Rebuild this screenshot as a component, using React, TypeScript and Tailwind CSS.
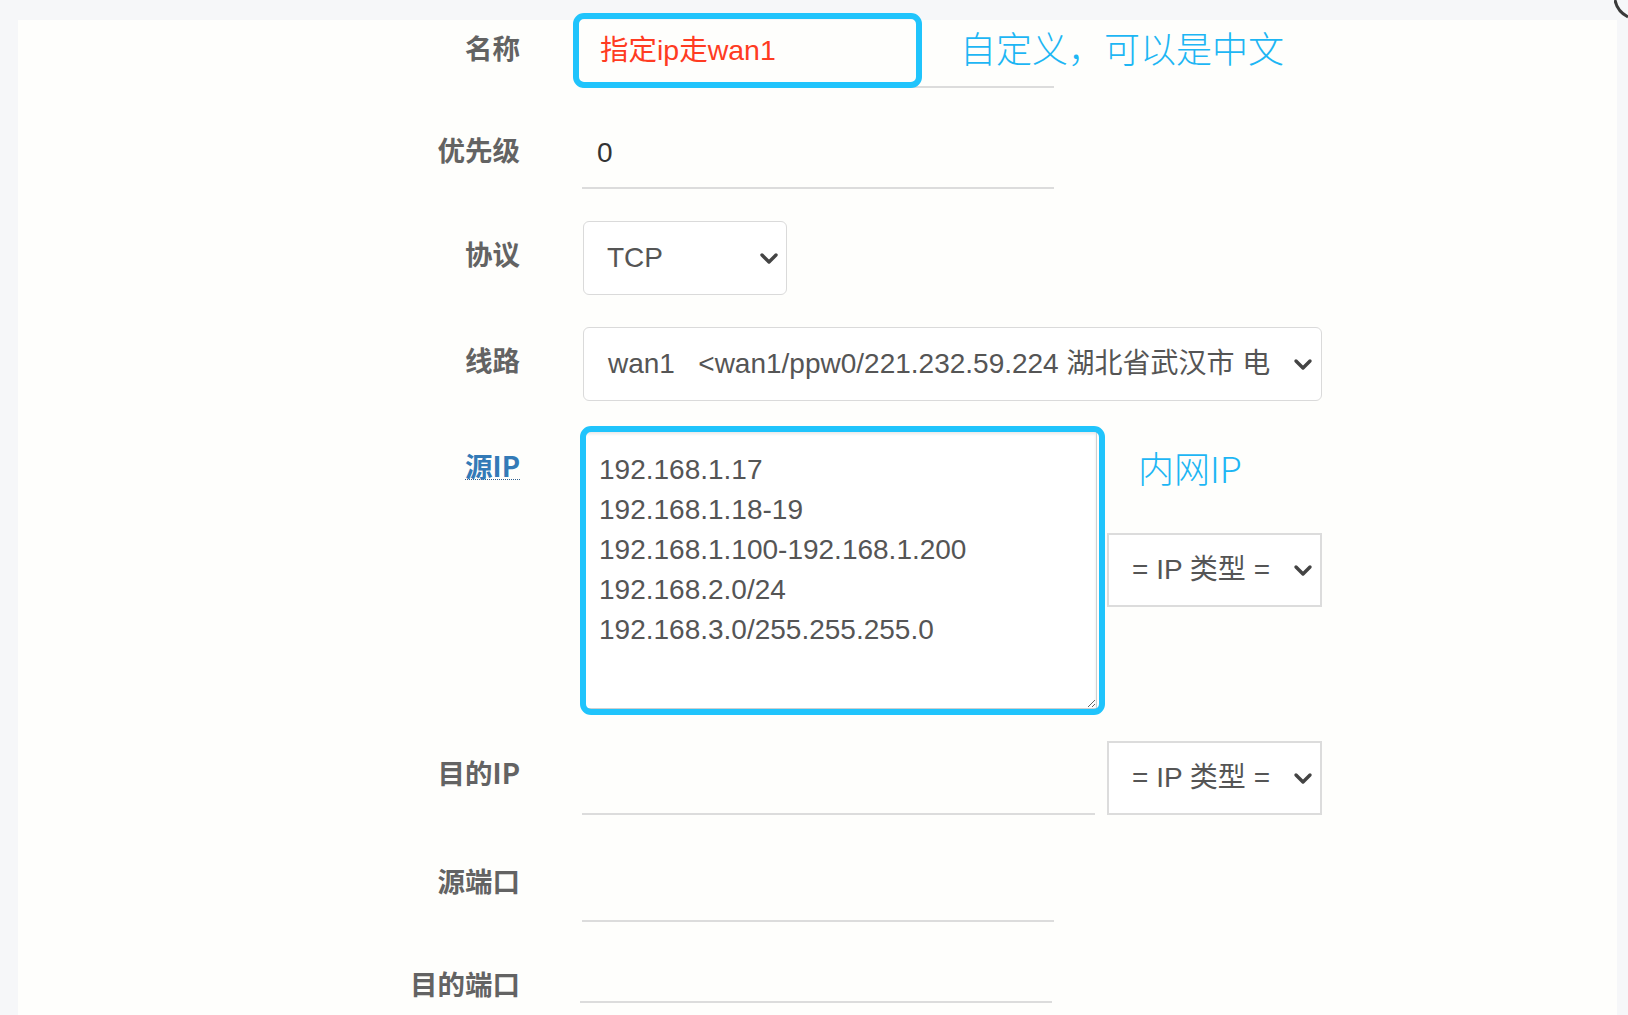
import React from "react";

const LATIN = "'Liberation Sans', 'Noto Sans CJK SC', Arial, sans-serif";
const CJK = "'Noto Sans CJK SC', 'Liberation Sans', sans-serif";

function Chevron() {
  return (
    <svg width="20" height="13" viewBox="0 0 20 13" className="shrink-0">
      <polyline
        points="3,3 10,10 17,3"
        fill="none"
        stroke="#444"
        strokeWidth="3.4"
        strokeLinecap="round"
        strokeLinejoin="round"
      />
    </svg>
  );
}

function Label({ text, offset, link }: { text: string; offset: string; link?: boolean }) {
  return (
    <div className={`w-[502px] shrink-0 text-right ${offset}`}>
      {link ? (
        <span
          className="inline-block border-b-[1.5px] border-dotted border-[#2f5f8f] text-[27.5px] font-bold leading-[28px] text-[#337ab7]"
          style={{ fontFamily: CJK }}
        >
          源IP
        </span>
      ) : (
        <span className="text-[27.5px] font-bold leading-[28px] text-[#636363]" style={{ fontFamily: CJK }}>
          {text}
        </span>
      )}
    </div>
  );
}

function UnderInput({ w, h = "h-[74px]", children }: { w: string; h?: string; children?: React.ReactNode }) {
  return (
    <div className={`${w} ${h} flex items-center border-b-2 border-[#dcdcdc]`}>{children}</div>
  );
}

export default function App() {
  return (
    <div className="relative h-[1015px] w-[1628px] overflow-hidden bg-[#f6f7f9]" style={{ fontFamily: LATIN }}>
      <div className="pl-[18px] pr-[11px] pt-[20px]">
        <div className="relative h-[995px] bg-[#fefefc]">
          <div className="flex flex-col">
            {/* 名称 */}
            <div className="flex items-start">
              <Label text="名称" offset="mt-[13px]" />
              <div className="relative ml-[62px]">
                <UnderInput w="w-[472px]" h="h-[68px]">
                  <span className="pb-[6px] pl-[18px] text-[28.5px] text-[#ff3b22]">指定ip走wan1</span>
                </UnderInput>
                <div className="pointer-events-none absolute left-[-9px] top-[-7px] h-[75px] w-[349px] rounded-[11px] border-[6px] border-[#20c4fc]" />
                <span
                  className="absolute left-[378px] top-[5px] whitespace-nowrap text-[36px] font-light leading-[44px] text-[#1db6f4]"
                  style={{ fontFamily: CJK }}
                >
                  自定义，可以是中文
                </span>
              </div>
            </div>

            {/* 优先级 */}
            <div className="mt-[27px] flex items-start">
              <Label text="优先级" offset="mt-[20px]" />
              <div className="ml-[62px]">
                <UnderInput w="w-[472px]">
                  <span className="pl-[15px] pt-[4px] text-[28px] text-[#333]">0</span>
                </UnderInput>
              </div>
            </div>

            {/* 协议 */}
            <div className="mt-[32px] flex items-start">
              <Label text="协议" offset="mt-[18px]" />
              <div className="ml-[63px] flex h-[74px] w-[204px] items-center justify-between rounded-[6px] border-[1.5px] border-[#dadada] bg-white pl-[23px] pr-[7px]">
                <span className="text-[28px] text-[#555]">TCP</span>
                <Chevron />
              </div>
            </div>

            {/* 线路 */}
            <div className="mt-[32px] flex items-start">
              <Label text="线路" offset="mt-[18px]" />
              <div className="ml-[63px] flex h-[74px] w-[739px] items-center justify-between rounded-[6px] border-[1.5px] border-[#dadada] bg-white pl-[24px] pr-[8px]">
                <span className="whitespace-pre text-[28px] text-[#555]">
                  {"wan1   <wan1/ppw0/221.232.59.224 湖北省武汉市 电"}
                </span>
                <Chevron />
              </div>
            </div>

            {/* 源IP */}
            <div className="mt-[30px] flex items-start">
              <Label text="源IP" offset="mt-[20px]" link />
              <div className="relative ml-[63px]">
                <textarea
                  readOnly
                  defaultValue={"192.168.1.17\n192.168.1.18-19\n192.168.1.100-192.168.1.200\n192.168.2.0/24\n192.168.3.0/255.255.255.0"}
                  className="block h-[278px] w-[514px] resize-y border-[1.5px] border-[#cfcfcf] bg-white px-[15px] pt-[18px] text-[28px] leading-[40px] text-[#555] shadow-[inset_0_2px_3px_rgba(0,0,0,0.09)] outline-none"
                  style={{ fontFamily: LATIN }}
                />
                <div className="pointer-events-none absolute left-[-3px] top-[-5px] h-[289px] w-[525px] rounded-[11px] border-[6px] border-[#20c4fc]" />
              </div>
              <div className="relative ml-[10px]">
                <span
                  className="absolute left-[31px] top-[14px] whitespace-nowrap text-[36px] font-light leading-[44px] text-[#1db6f4]"
                  style={{ fontFamily: CJK }}
                >
                  内网IP
                </span>
                <div className="mt-[102px] flex h-[74px] w-[215px] items-center justify-between border-2 border-[#dcdcdc] bg-white pl-[23px] pr-[7px]">
                  <span className="whitespace-pre text-[28px] text-[#555]">{"= IP 类型 ="}</span>
                  <Chevron />
                </div>
              </div>
            </div>

            {/* 目的IP */}
            <div className="mt-[32px] flex items-start">
              <Label text="目的IP" offset="mt-[17px]" />
              <div className="ml-[62px]">
                <UnderInput w="w-[513px]" />
              </div>
              <div className="ml-[12px] flex h-[74px] w-[215px] items-center justify-between border-2 border-[#dcdcdc] bg-white pl-[23px] pr-[7px]">
                <span className="whitespace-pre text-[28px] text-[#555]">{"= IP 类型 ="}</span>
                <Chevron />
              </div>
            </div>

            {/* 源端口 */}
            <div className="mt-[33px] flex items-start">
              <Label text="源端口" offset="mt-[18px]" />
              <div className="ml-[62px]">
                <UnderInput w="w-[472px]" />
              </div>
            </div>

            {/* 目的端口 */}
            <div className="mt-[7px] flex items-start">
              <Label text="目的端口" offset="mt-[40px]" />
              <div className="ml-[60px]">
                <UnderInput w="w-[472px]" />
              </div>
            </div>
          </div>
        </div>
      </div>
      <svg className="absolute right-0 top-0" width="14" height="20" viewBox="0 0 14 20">
        <path d="M1 0 Q 3 11 14 17" fill="none" stroke="#3a3a3a" strokeWidth="3" />
      </svg>
    </div>
  );
}
